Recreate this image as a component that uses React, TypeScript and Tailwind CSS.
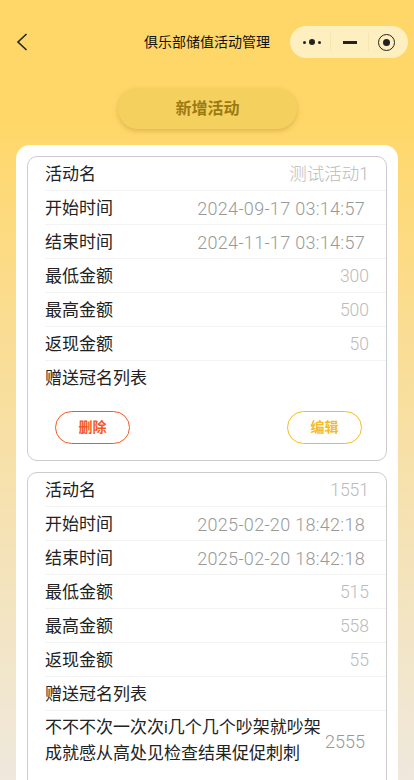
const font = "font-['Liberation_Sans','Noto_Sans_CJK_SC',sans-serif]";

type RowData = { label: string; value?: string; dark?: boolean };

function Row({ label, value, dark, last }: RowData & { last?: boolean }) {
  return (
    <div className={`flex h-[34px] items-center justify-between ${last ? "" : "border-b border-[#f3f3f3]"}`}>
      <span className="pt-[1px] text-[17px] leading-[33px] text-[#222]">{label}</span>
      {value ? (
        dark ? (
          <span className="pr-[21px] pt-[1px] font-['Roboto','Noto_Sans_CJK_SC',sans-serif] text-[18px] font-light tracking-[0.3px] text-[#999]">{value}</span>
        ) : (
          <span className="pr-[17px] pt-[1px] font-['Roboto','Noto_Sans_CJK_SC',sans-serif] text-[17.5px] font-light text-[#bbb]">{value}</span>
        )
      ) : null}
    </div>
  );
}

function Card({ rows, children, lastBorder }: { rows: RowData[]; children?: React.ReactNode; lastBorder?: boolean }) {
  return (
    <div className="rounded-[10px] border border-[#cccccc] pl-[17px]">
      {rows.map((r, i) => (
        <Row key={i} {...r} last={i === rows.length - 1 && !lastBorder} />
      ))}
      {children}
    </div>
  );
}

export default function App() {
  return (
    <div className={`${font} h-[780px] w-[414px] overflow-hidden bg-gradient-to-b from-[#ffd768] from-[15%] to-[#efe8dc]`}>
      <div className="flex h-[84px] items-start pt-[26px]">
        <div className="flex h-[32px] w-[44px] items-center pl-[16px]">
          <svg width="12" height="18" viewBox="0 0 12 18" fill="none">
            <path d="M10.5 1 L2 9 L10.5 17" stroke="#222" strokeWidth="1.6" />
          </svg>
        </div>
        <div className="ml-[100px] flex h-[32px] w-[126px] items-center whitespace-nowrap text-[14px] text-[#111]">俱乐部储值活动管理</div>
        <div className="ml-[20px] flex h-[32px] w-[118px] items-center rounded-full bg-[#fdefbf]">
          <div className="flex w-[40px] items-center justify-center gap-[3px] pl-[4px]">
            <span className="h-[3px] w-[3px] rounded-full bg-[#222]" />
            <span className="h-[6px] w-[6px] rounded-full bg-[#222]" />
            <span className="h-[3px] w-[3px] rounded-full bg-[#222]" />
          </div>
          <div className="h-[18px] w-px bg-[#f5e5b0]" />
          <div className="flex w-[37px] items-center justify-center">
            <span className="h-[3px] w-[14px] bg-[#222]" />
          </div>
          <div className="h-[18px] w-px bg-[#f5e5b0]" />
          <div className="flex w-[35px] items-center justify-center">
            <span className="flex h-[17px] w-[17px] items-center justify-center rounded-full border-[1.5px] border-[#222]">
              <span className="h-[7px] w-[7px] rounded-full bg-[#222]" />
            </span>
          </div>
        </div>
      </div>

      <div className="flex justify-center pl-[1px]">
        <div className="mt-[4px] flex h-[41px] w-[179px] items-center justify-center rounded-[20px] bg-[#f4d05f] text-[16px] font-bold text-[#9c7a12] shadow-[0_2px_5px_rgba(190,150,50,0.5)]">
          新增活动
        </div>
      </div>

      <div className="mx-[16px] mt-[16px] flex flex-col gap-[11px] rounded-t-[14px] bg-white px-[11px] pt-[11px]">
        <Card
          rows={[
            { label: "活动名", value: "测试活动1" },
            { label: "开始时间", value: "2024-09-17 03:14:57", dark: true },
            { label: "结束时间", value: "2024-11-17 03:14:57", dark: true },
            { label: "最低金额", value: "300" },
            { label: "最高金额", value: "500" },
            { label: "返现金额", value: "50" },
            { label: "赠送冠名列表" },
          ]}
        >
          <div className="flex justify-between py-[16px] pl-[10px] pr-[24px]">
            <div className="flex h-[33px] w-[75px] items-center justify-center rounded-full border border-[#f4591f] text-[14px] font-bold text-[#f4591f]">删除</div>
            <div className="flex h-[33px] w-[75px] items-center justify-center rounded-full border border-[#f4bb2a] text-[14px] font-bold text-[#f4bb2a]">编辑</div>
          </div>
        </Card>
        <Card
          lastBorder
          rows={[
            { label: "活动名", value: "1551" },
            { label: "开始时间", value: "2025-02-20 18:42:18", dark: true },
            { label: "结束时间", value: "2025-02-20 18:42:18", dark: true },
            { label: "最低金额", value: "515" },
            { label: "最高金额", value: "558" },
            { label: "返现金额", value: "55" },
            { label: "赠送冠名列表" },
          ]}
        >
          <div className="flex items-center justify-between pt-[4px]">
            <span className="w-[278px] text-[17px] leading-[26px] text-[#222]">不不不次一次次i几个几个吵架就吵架成就感从高处见检查结果促促刺刺</span>
            <span className="pr-[21px] font-['Roboto','Noto_Sans_CJK_SC',sans-serif] text-[18px] font-light text-[#999]">2555</span>
          </div>
          <div className="h-[60px]" />
        </Card>
      </div>
    </div>
  );
}
